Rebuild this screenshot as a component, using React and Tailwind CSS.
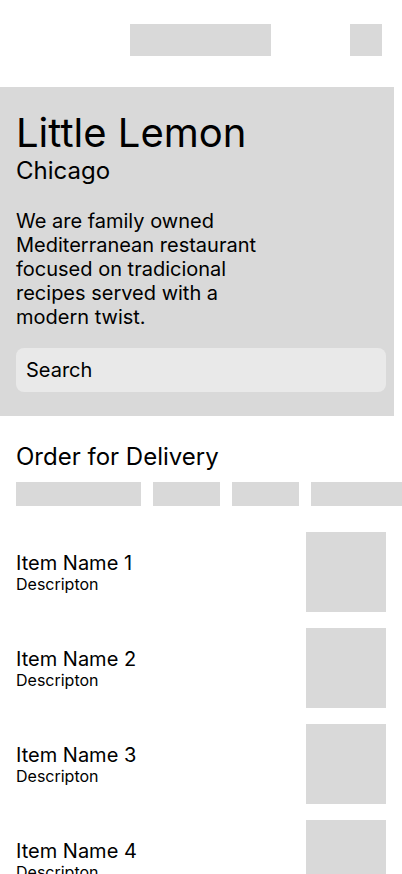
const categories = ['w-[125px]', 'w-[67px]', 'w-[67px]', 'w-[91px]'];

const items = [
  { name: 'Item Name 1', desc: 'Descripton' },
  { name: 'Item Name 2', desc: 'Descripton' },
  { name: 'Item Name 3', desc: 'Descripton' },
  { name: 'Item Name 4', desc: 'Descripton' },
];

export default function App() {
  return (
    <div className="w-[402px] bg-white text-black font-['Inter','Noto_Sans',sans-serif]">
      {/* Header */}
      <header className="grid grid-cols-[1fr_auto_1fr] items-center pl-[19px] pr-5 pt-6 pb-[31px]">
        <div />
        <div className="w-[141px] h-8 bg-[#d9d9d9]" />
        <div className="flex justify-end">
          <div className="w-8 h-8 bg-[#d9d9d9]" />
        </div>
      </header>

      {/* Hero */}
      <section className="w-[394px] bg-[#d9d9d9] pl-4 pt-[23px] pb-6">
        <h1 className="text-[40px] leading-[46px] font-normal">Little Lemon</h1>
        <h2 className="text-2xl leading-[29px] font-normal">Chicago</h2>
        <p className="mt-6 w-[262px] text-xl leading-6">
          We are family owned Mediterranean restaurant focused on tradicional recipes served with a modern twist.
        </p>
        <div className="mt-[19px] w-[370px] h-11 rounded-lg bg-[#e9e9e9] px-[10px] flex items-center">
          <span className="text-xl leading-6">Search</span>
        </div>
      </section>

      {/* Order for Delivery */}
      <section className="pt-[26px]">
        <h3 className="px-4 text-2xl leading-[29px] font-normal">Order for Delivery</h3>
        <div className="mt-[11px] pl-4 flex gap-3 overflow-hidden">
          {categories.map((w, i) => (
            <div key={i} className={`${w} h-6 shrink-0 bg-[#d9d9d9]`} />
          ))}
        </div>

        <div className="mt-[26px] flex flex-col gap-4">
          {items.map((item) => (
            <div key={item.name} className="flex items-center justify-between px-4">
              <div className="pt-px">
                <p className="text-xl leading-6">{item.name}</p>
                <p className="text-base leading-[1.21]">{item.desc}</p>
              </div>
              <div className="w-20 h-20 bg-[#d9d9d9]" />
            </div>
          ))}
        </div>
      </section>
    </div>
  );
}
